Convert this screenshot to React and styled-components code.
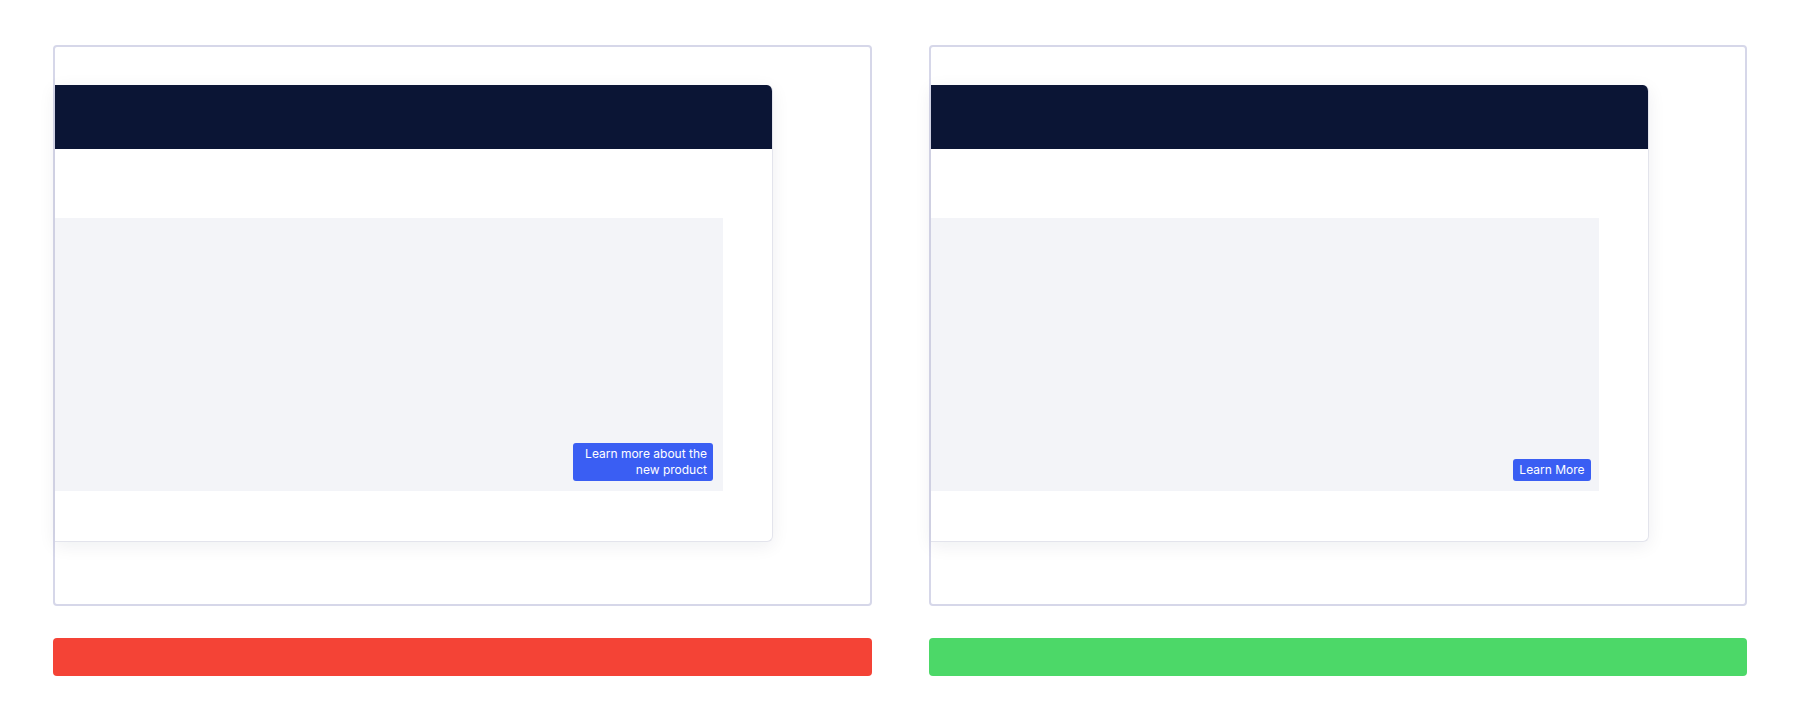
import styled, { createGlobalStyle } from "styled-components";

const GlobalStyle = createGlobalStyle`
  html, body {
    margin: 0;
    padding: 0;
    background: #ffffff;
    font-family: Inter, "Noto Sans", sans-serif;
  }
`;

const Page = styled.div`
  display: grid;
  grid-template-columns: 1fr 1fr;
  column-gap: 57px;
  padding: 45px 53px 0 53px;
`;

const Column = styled.div`
  display: flex;
  flex-direction: column;
  gap: 32px;
`;

const Frame = styled.div`
  height: 561px;
  box-sizing: border-box;
  border: 2px solid #d6d7e9;
  border-radius: 4px;
  padding-top: 38px;
`;

const Card = styled.div`
  width: 718px;
  box-sizing: border-box;
  background: #ffffff;
  border: 1px solid #e3e4ec;
  border-left: none;
  border-top: none;
  border-radius: 0 6px 6px 0;
  box-shadow: 0 4px 18px rgba(20, 24, 60, 0.07);
  overflow: hidden;
`;

const Header = styled.div`
  height: 64px;
  background: #0b1535;
`;

const Body = styled.div`
  padding: 69px 49px 50px 0;
`;

const Stage = styled.div`
  position: relative;
  height: 273px;
  background: #f3f4f8;
`;

const LearnButton = styled.button`
  position: absolute;
  right: ${(p) => p.$right}px;
  bottom: 10px;
  max-width: 140px;
  padding: 3px 6px;
  border: none;
  border-radius: 3px;
  background: #3a5ef3;
  color: #ffffff;
  font-family: Inter, "Noto Sans", sans-serif;
  font-size: 12px;
  line-height: 16px;
  text-align: right;
  cursor: pointer;
`;

const StatusBar = styled.div`
  height: 38px;
  border-radius: 4px;
  background: ${(p) => (p.$ok ? "#4cd868" : "#f44336")};
`;

const Demo = ({ label, ok, right }) => (
  <Column>
    <Frame>
      <Card>
        <Header />
        <Body>
          <Stage>
            <LearnButton $right={right}>{label}</LearnButton>
          </Stage>
        </Body>
      </Card>
    </Frame>
    <StatusBar $ok={ok} />
  </Column>
);

export default function App() {
  return (
    <>
      <GlobalStyle />
      <Page>
        <Demo label="Learn more about the new product" ok={false} right={10} />
        <Demo label="Learn More" ok right={8} />
      </Page>
    </>
  );
}
